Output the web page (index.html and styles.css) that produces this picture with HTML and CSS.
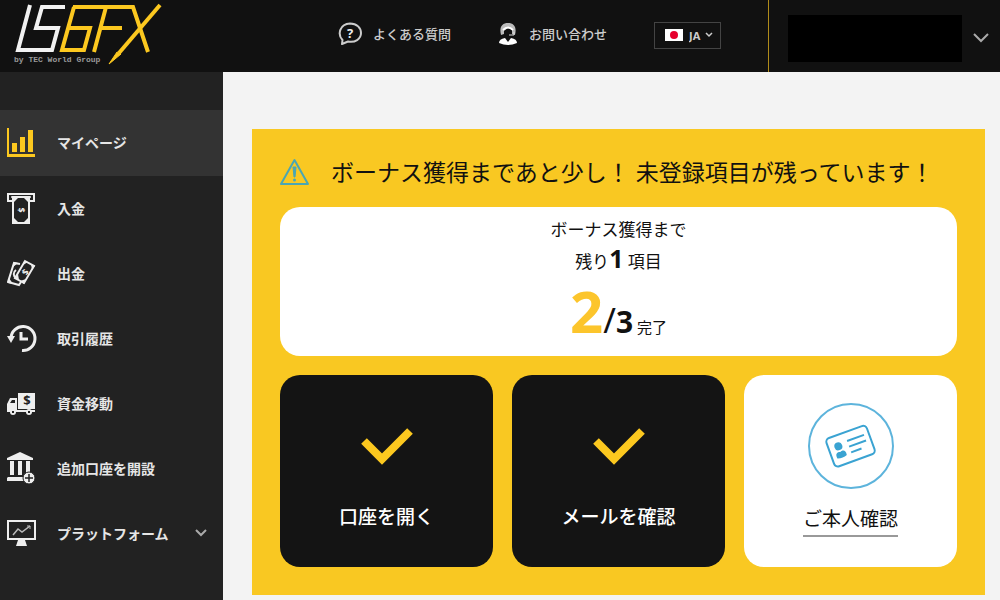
FILE: index.html
```html
<!DOCTYPE html>
<html lang="ja">

<head>
  <meta charset="utf-8">
  <meta name="viewport" content="width=device-width, initial-scale=1">
  <title>マイページ | IS6FX</title>
  <link rel="stylesheet" href="styles.css">
</head>

<body>
  <header class="header">
    <a class="logo" href="#" aria-label="IS6FX by TEC World Group">
      <svg class="logo-mark" width="150" height="62" viewBox="0 0 150 62" fill="none" stroke-width="4">
        <g stroke="#f2f2f2">
          <path d="M16 2L4 47H38L44 25H22L28 4H51" />
        </g>
        <g stroke="#fcc81f">
          <path d="M59 4H119L134 49M60 4L48 47H70L76 25H55M92 4L80 49M87 25H108" />
          <path d="M146 2L105 50" />
        </g>
        <path d="M95 61L103 49L107 51Z" fill="#fcc81f" stroke="#fcc81f" stroke-width="1" />
      </svg>
      <span class="logo-sub">by TEC World Group</span>
    </a>

    <nav class="header-nav">
      <a class="header-link" href="#">
        <svg width="24" height="24" viewBox="0 0 24 24" fill="none" stroke="#ccc" stroke-width="2">
          <path d="M4.500 18C-1 12 2 2 12 1.500C19 1.500 23 6 23 11C23 17 17 21 10 19.500L4 22Z" stroke-linejoin="round" />
          <text x="12" y="16" class="icon-text question">?</text>
        </svg>
        よくある質問
      </a>
      <a class="header-link" href="#">
        <svg width="20" height="24" viewBox="0 0 20 24">
          <path d="M3 13C1 5 4 1 10 1S19 5 17 13L14 12V8L10 6L6 9V12Z" fill="#bbb" />
          <path d="M5 8Q10 3 15 8" fill="none" stroke="#fff" stroke-width="2" />
          <path d="M6 9L10 7L14 9V12L11 15H8L6 12Z" fill="#111" />
          <path d="M11 13H16V10" fill="none" stroke="#ddd" />
          <path d="M1 21Q1 17 7 16L10 20L13 16Q19 17 19 21Q10 25 1 21Z" fill="#fff" />
        </svg>
        お問い合わせ
      </a>
      <label class="lang">
        <svg width="18" height="12" viewBox="0 0 18 12">
          <rect width="18" height="12" fill="#fff" />
          <circle cx="9" cy="6" r="4" fill="#e6002d" />
        </svg>
        <select class="lang-select" aria-label="言語">
          <option>JA</option>
        </select>
        <svg width="8" height="6" viewBox="0 0 8 6" fill="none" stroke="#ccc" stroke-width="1.500">
          <path d="M1 1L4 4L7 1" />
        </svg>
      </label>
    </nav>

    <div class="account">
      <div class="account-name"></div>
      <button class="account-toggle" type="button" aria-label="アカウントメニュー">
        <svg width="16" height="10" viewBox="0 0 16 10" fill="none" stroke="#aaa" stroke-width="2">
          <path d="M1 1L8 8L15 1" />
        </svg>
      </button>
    </div>
  </header>

  <div class="layout">
    <nav class="sidebar">
      <a class="side-link active" href="#">
        <svg class="side-icon" viewBox="0 0 30 32" fill="#fcc81f">
          <path d="M0 2H2V28H28V31H0Z" />
          <path d="M5 17H10V26H5ZM13 11H18V26H13ZM21 4H26V26H21Z" />
        </svg>
        マイページ
      </a>
      <a class="side-link" href="#">
        <svg class="side-icon" viewBox="0 0 30 32" fill="none" stroke="#eee" stroke-width="2">
          <path d="M5 9H1V2H27V9H23" />
          <path d="M4 5H24" stroke-width="1.500" />
          <rect x="6" y="5" width="16" height="26" />
          <path d="M7 6H11L7 10ZM21 6H17L21 10ZM7 30H11L7 26ZM21 30H17L21 26Z" fill="#eee" stroke="none" />
          <text x="0" y="3" class="icon-text note" transform="translate(14 18) rotate(90)">$</text>
        </svg>
        入金
      </a>
      <a class="side-link" href="#">
        <svg class="side-icon" viewBox="0 0 30 32" fill="none" stroke="#eee" stroke-width="2">
          <path d="M13 7L7 6L1 25L12 28L14 25M9 13C6 15 6 19 9 21" />
          <path d="M7 5L11 6L6 10ZM1 26L2 21L6 27Z" fill="#eee" stroke="none" />
          <path d="M18 4L27 9L17 26L8 21Z" fill="#222" />
          <path d="M17 4L21 5L16 8ZM28 9L24 7L25 13ZM17 27L13 24L19 22ZM8 21L11 17L12 23Z" fill="#eee" stroke="none" />
          <text x="0" y="3" class="icon-text note" transform="translate(18 15) rotate(120)">$</text>
        </svg>
        出金
      </a>
      <a class="side-link" href="#">
        <svg class="side-icon" viewBox="0 0 30 32" fill="none" stroke="#eee" stroke-width="3">
          <path d="M4 16A12 12 0 1 1 15 28.500" />
          <path d="M14 10V17H21" />
          <path d="M0 14H8L4 21Z" fill="#eee" stroke="none" />
        </svg>
        取引履歴
      </a>
      <a class="side-link" href="#">
        <svg class="side-icon" viewBox="0 0 30 32" fill="#eee">
          <rect x="11" y="6" width="17" height="16" />
          <path d="M0 23V17L3 11H10V23H28V25H0Z" />
          <path d="M3 16L5 13H8V16Z" fill="#222" />
          <circle cx="6" cy="25" r="3" />
          <circle cx="22" cy="25" r="3" />
          <path d="M5 25H7M21 25H23" stroke="#222" stroke-width="2" />
          <text x="20" y="18" class="icon-text parcel">$</text>
        </svg>
        資金移動
      </a>
      <a class="side-link" href="#">
        <svg class="side-icon" viewBox="0 0 30 32" fill="#eee">
          <path d="M0 6L13 0L26 6V8H0Z" />
          <path d="M3 9H7V23H3ZM11 9H15V23H11ZM19 9H23V23H19ZM1 25H18V29H0V26Z" />
          <circle cx="22" cy="26" r="6" stroke="#222" />
          <path d="M22 22V30M18 26H26" stroke="#222" stroke-width="1.500" />
        </svg>
        追加口座を開設
      </a>
      <a class="side-link" href="#">
        <svg class="side-icon" viewBox="0 0 30 32" fill="none" stroke="#eee" stroke-width="2">
          <rect x="1" y="4" width="27" height="18" />
          <path d="M6 18L11 12L15 15L23 9" stroke="#bbb" stroke-width="1.500" />
          <path d="M20 9H23V12" stroke="#bbb" stroke-width="1" />
          <path d="M11 23H18L20 29H9Z" fill="#eee" stroke="none" />
        </svg>
        プラットフォーム
        <svg class="side-chevron" width="12" height="8" viewBox="0 0 12 8" fill="none" stroke="#aaa" stroke-width="2">
          <path d="M1 1L6 6L11 1" />
        </svg>
      </a>
    </nav>

    <main class="main">
      <section class="bonus">
        <h1 class="bonus-title">
          <svg width="30" height="28" viewBox="0 0 30 28" fill="none" stroke="#4ba6b4" stroke-width="2" stroke-linejoin="round">
            <path d="M14.500 2L28 26H1Z" />
            <path d="M13 9H16L15 19H14Z" fill="#4ba6b4" stroke-width="1" />
            <circle cx="14.500" cy="22" r="1.500" fill="#4ba6b4" stroke="none" />
          </svg>
          ボーナス獲得まであと少し！ 未登録項目が残っています！
        </h1>

        <div class="summary">
          <p class="summary-text">ボーナス獲得まで</p>
          <p class="summary-text">残り<strong class="left-count">1</strong> 項目</p>
          <p class="progress"><strong class="done-count">2</strong><span class="slash">/</span><strong class="total-count">3</strong> 完了</p>
        </div>

        <div class="steps">
          <div class="step done">
            <div class="step-icon">
              <svg width="52" height="38" viewBox="0 0 52 38" fill="none" stroke="#fcc81f" stroke-width="8">
                <path d="M3 14L21 32L49 4" />
              </svg>
            </div>
            <span class="step-label">口座を開く</span>
          </div>
          <div class="step done">
            <div class="step-icon">
              <svg width="52" height="38" viewBox="0 0 52 38" fill="none" stroke="#fcc81f" stroke-width="8">
                <path d="M3 14L21 32L49 4" />
              </svg>
            </div>
            <span class="step-label">メールを確認</span>
          </div>
          <div class="step">
            <div class="step-icon">
              <svg width="86" height="86" viewBox="0 0 86 86" fill="none" stroke="#3aa3d2" stroke-width="2">
                <circle cx="43" cy="43" r="42" stroke="#5db4dc" />
                <g transform="rotate(-20 43 43)">
                  <rect x="21" y="28" width="43" height="30" rx="4" />
                  <circle cx="31" cy="39" r="4" fill="#3aa3d2" stroke="none" />
                  <path d="M26 50C25 44 29 44 31 45C33 44 37 44 36 50Q31 52 26 50Z" fill="#3aa3d2" stroke="none" />
                  <path d="M41 37H59M41 43H59M41 49H52" />
                </g>
              </svg>
            </div>
            <a class="step-label step-link" href="#">ご本人確認</a>
          </div>
        </div>
      </section>
    </main>
  </div>
</body>

</html>
```

FILE: styles.css
```css
* {
  box-sizing: border-box;
}

body {
  display: flex;
  flex-direction: column;
  min-height: 100vh;
  margin: 0;
  background-color: #f3f3f3;
  color: #111;
  font-family: "Noto Sans", "Noto Sans CJK JP", sans-serif;
}

a {
  color: inherit;
  text-decoration: none;
}

svg {
  flex: none;
}

/* header */
.header {
  display: flex;
  height: 72px;
  background-color: #111;
  color: #ccc;
}

.logo {
  display: grid;
  padding: 3px 0 0 14px;
}

.logo-mark,
.logo-sub {
  grid-area: 1 / 1;
}

.logo-sub {
  align-self: end;
  padding-bottom: 6px;
  color: #999;
  font-family: "Liberation Mono", monospace;
  font-size: 8px;
  font-weight: bold;
  line-height: 12px;
}

.header-nav {
  display: flex;
  align-items: center;
  gap: 47px;
  margin-left: auto;
  padding: 0 47px 2px 0;
}

.header-link {
  display: flex;
  align-items: center;
  gap: 11px;
  padding-bottom: 3px;
  font-size: 13px;
  font-weight: 500;
  white-space: nowrap;
}

.lang {
  display: flex;
  align-items: center;
  height: 27px;
  padding: 0 7px 0 10px;
  border: 1px solid #444;
}

.lang-select {
  width: 16px;
  margin-left: 6px;
  padding: 0;
  border: 0;
  appearance: none;
  background: none;
  color: #ccc;
  font-family: "Noto Sans", sans-serif;
  font-size: 11px;
  font-weight: bold;
}

.account {
  display: flex;
  align-items: center;
  gap: 11px;
  width: 232px;
  padding: 4px 11px 0 19px;
  border-left: 1px solid #b08c1a;
}

.account-name {
  flex: 1;
  height: 47px;
  background-color: #000;
}

.account-toggle {
  display: flex;
  padding: 0;
  border: 0;
  background: none;
}

/* sidebar */
.layout {
  display: flex;
  flex: 1;
}

.sidebar {
  flex: none;
  width: 223px;
  padding-top: 38px;
  background-color: #222;
}

.side-link {
  display: flex;
  align-items: center;
  gap: 20px;
  height: 65px;
  padding: 0 16px 2px 7px;
  color: #e6e6e6;
  font-size: 14px;
  font-weight: bold;
}

.side-link.active {
  height: 66px;
  background-color: #333;
}

.side-icon {
  width: 30px;
  height: 32px;
}

.side-chevron {
  margin-left: auto;
}

.icon-text {
  fill: #eee;
  stroke: none;
  font-family: "Noto Sans", sans-serif;
  font-weight: bold;
  text-anchor: middle;
}

.question {
  font-size: 13px;
}

.note {
  font-size: 9px;
}

.parcel {
  font-size: 13px;
  fill: #222;
}

/* main */
.main {
  flex: 1;
  padding: 57px 15px 4px 29px;
}

.bonus {
  padding: 28px;
  background-color: #f9c822;
}

.bonus-title {
  display: flex;
  align-items: center;
  gap: 21px;
  margin: 0 0 20px;
  font-size: 23px;
  font-weight: 400;
  line-height: 30px;
}

.summary {
  padding: 7px 0 11px;
  border-radius: 20px;
  background-color: #fff;
  text-align: center;
}

.summary p {
  margin: 0;
}

.summary strong,
.slash {
  line-height: 1;
}

.summary-text {
  font-size: 17px;
  line-height: 32px;
}

.left-count {
  font-size: 25px;
}

.summary .progress {
  margin-top: 4px;
  font-size: 15px;
  line-height: 36px;
}

.done-count {
  color: #fcc52c;
  font-size: 58px;
}

.slash {
  font-size: 34px;
}

.total-count {
  font-size: 30px;
}

.steps {
  display: grid;
  grid-template-columns: repeat(3, 1fr);
  gap: 19px;
  margin-top: 19px;
}

.step {
  display: flex;
  flex-direction: column;
  align-items: center;
  padding: 28px 0 30px;
  border-radius: 20px;
  background-color: #fff;
}

.step.done {
  background-color: #141414;
  color: #fff;
}

.step-icon {
  display: flex;
  align-items: center;
  height: 86px;
}

.step-label {
  margin-top: 14px;
  font-size: 19px;
  font-weight: 500;
  line-height: 28px;
}

.step-link {
  padding: 2px 0;
  border-bottom: 2px solid #999;
  font-weight: 400;
}
```
